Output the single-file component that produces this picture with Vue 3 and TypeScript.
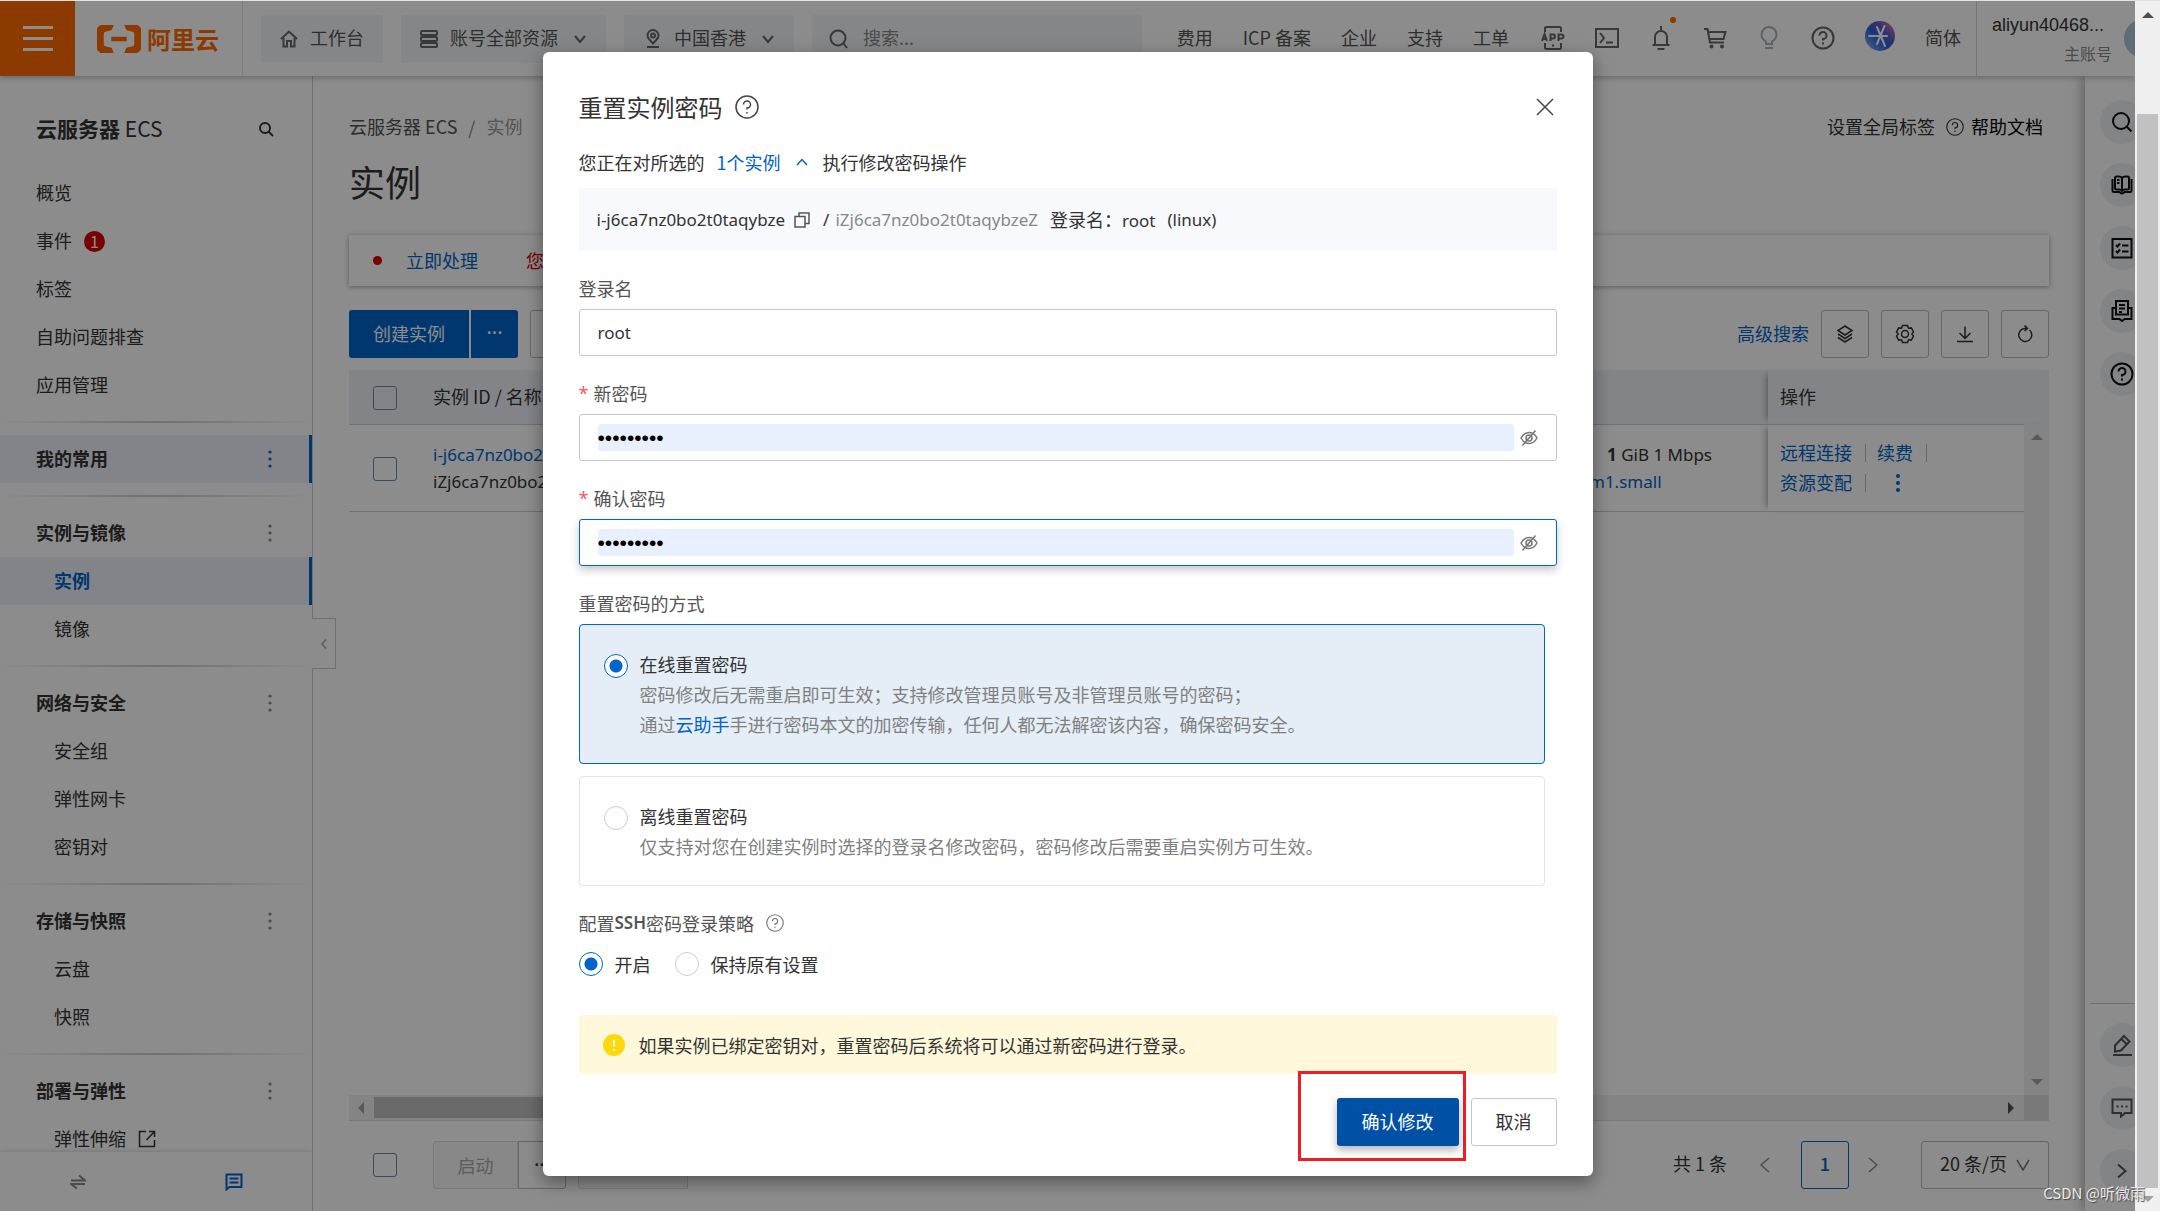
<script setup lang="ts">
import { ref } from 'vue'

interface NavItem { label: string; badge?: string; active?: boolean; external?: boolean }
interface NavGroup { title: string; highlight?: boolean; items: NavItem[] }

const topItems: NavItem[] = [
  { label: '概览' },
  { label: '事件', badge: '1' },
  { label: '标签' },
  { label: '自助问题排查' },
  { label: '应用管理' },
]

const groups: NavGroup[] = [
  { title: '我的常用', highlight: true, items: [] },
  { title: '实例与镜像', items: [{ label: '实例', active: true }, { label: '镜像' }] },
  { title: '网络与安全', items: [{ label: '安全组' }, { label: '弹性网卡' }, { label: '密钥对' }] },
  { title: '存储与快照', items: [{ label: '云盘' }, { label: '快照' }] },
  { title: '部署与弹性', items: [{ label: '弹性伸缩', external: true }] },
]

const loginName = ref('root')
const newPassword = ref('Abcd12345')
const confirmPassword = ref('Abcd12345')
const resetMode = ref('online')
const sshPolicy = ref('on')
const keyword = ref('')
const pageSize = ref('20')
</script>

<template>
  <div class="window">
    <div class="viewport">
      <header class="topbar">
        <button class="burger" aria-label="菜单"><i></i><i></i><i></i></button>
        <a class="logo" href="#" aria-label="阿里云">
          <svg width="44" height="28" viewBox="0 0 44 28" fill="none">
            <path d="M16 0H8Q0 0 0 8V20Q0 28 8 28H16L14 23.500 8 22Q6 21.500 6 19V9Q6 6.500 8 6L14 4.500Z" fill="#ff6a00" />
            <path d="M28 0H36Q44 0 44 8V20Q44 28 36 28H28L30 23.500 36 22Q38 21.500 38 19V9Q38 6.500 36 6L30 4.500Z" fill="#ff6a00" />
            <path d="M15 12.500H29V15.500H15Z" fill="#ff6a00" />
          </svg>
          <span>阿里云</span>
        </a>
        <div class="tools">
          <button class="chip">
            <svg width="18" height="18" viewBox="0 0 18 18"><path d="M1 9 9 1.500 17 9M3.500 8V16.500H7V11H11V16.500H14.500V8" /></svg>
            <span>工作台</span>
          </button>
          <button class="chip wide">
            <svg width="18" height="18" viewBox="0 0 18 18"><rect x="1" y="1" width="16" height="4" rx="1" /><rect x="1" y="7" width="16" height="4" rx="1" /><rect x="1" y="13" width="16" height="4" rx="1" /></svg>
            <span>账号全部资源</span>
            <svg width="14" height="10" viewBox="0 0 14 10"><path d="M2 2 7 8 12 2" /></svg>
          </button>
          <button class="chip wide">
            <svg width="19" height="19" viewBox="-2 0 19 19"><path d="M8 14.500C4 10.500 2.500 8.500 2.500 6.500A5.500 5.500 0 0 1 13.500 6.500C13.500 8.500 12 10.500 8 14.500ZM2 18H14" /><circle cx="8" cy="6.500" r="2" /></svg>
            <span>中国香港</span>
            <svg width="14" height="10" viewBox="0 0 14 10"><path d="M2 2 7 8 12 2" /></svg>
          </button>
          <label class="search">
            <svg width="20" height="20" viewBox="0 0 20 20"><circle cx="9" cy="9" r="7.500" /><path d="M14.500 14.500 18 19" /></svg>
            <input v-model="keyword" type="text" placeholder="搜索..." aria-label="搜索" />
          </label>
        </div>
        <nav class="links">
          <a href="#">费用</a><a href="#">ICP 备案</a><a href="#">企业</a><a href="#">支持</a><a href="#">工单</a>
        </nav>
        <div class="icons">
          <button aria-label="APP">
            <svg width="24" height="24" viewBox="0 0 24 24"><path d="M4 6V2.500Q4 1 5.500 1H18.500Q20 1 20 2.500V6M4 17V21.500Q4 23 5.500 23H18.500Q20 23 20 21.500V17M11 19.500H13" /><path d="M1 15 3.500 8 6 15M2 13H5M9.500 15V8.500H12Q14 8.500 14 10.500T12 12.500H9.500M17.500 15V8.500H20Q22.500 8.500 22.500 10.500T20 12.500H17.500" /></svg>
          </button>
          <button aria-label="终端">
            <svg width="24" height="24" viewBox="0 0 24 24"><rect x="1" y="3" width="22" height="18" /><path d="M5 7 9 12 5 17M11 16.500H18" /></svg>
          </button>
          <button class="bell" aria-label="消息">
            <svg width="24" height="24" viewBox="0 0 24 24"><path d="M12 0V4M3.500 19H20.500M6 19V11A6 6 0 0 1 18 11V19M8.500 23H15.500" /></svg>
            <i></i>
          </button>
          <button aria-label="购物车">
            <svg width="24" height="24" viewBox="0 0 24 24"><path d="M1 3H4.500L7 16.500H21M5.500 6H22.500L20.500 13H7" /><circle cx="8.500" cy="20.500" r="1" /><circle cx="19" cy="20.500" r="1" /></svg>
          </button>
          <button class="faint" aria-label="提示">
            <svg width="24" height="24" viewBox="0 0 24 24"><path d="M9 18V15.500Q4.500 13 4.500 8.500A7.500 7.500 0 0 1 19.500 8.500Q19.500 13 15 15.500V18ZM8 22H16" /></svg>
          </button>
          <button aria-label="帮助">
            <svg width="24" height="24" viewBox="0 0 24 24"><circle cx="12" cy="12" r="10.500" /><path d="M8.500 9.500A3.500 3.500 0 1 1 12 13V14.500M12 16.500V18.500" /></svg>
          </button>
          <button class="ai" aria-label="AI 助理">
            <svg width="30" height="30" viewBox="0 0 30 30">
              <defs><linearGradient id="ai" x1="0" y1="1" x2="1" y2="0"><stop offset="0" stop-color="#8ab8f5" /><stop offset=".45" stop-color="#2f5fe0" /><stop offset=".65" stop-color="#5a5cc8" /><stop offset="1" stop-color="#ff7a9a" /></linearGradient></defs>
              <circle cx="15" cy="15" r="15" fill="url(#ai)" stroke="none" />
              <path d="M4 15H22M12 6 20 25M19.500 5 12 23" stroke="#fff" stroke-linecap="round" />
            </svg>
          </button>
        </div>
        <a class="lang" href="#">简体</a>
        <div class="user">
          <div><b>aliyun40468...</b><small>主账号</small></div>
          <i></i>
        </div>
      </header>

      <div class="body">
        <aside class="side">
          <div class="side-title">
            <h2>云服务器 <span>ECS</span></h2>
            <svg width="16" height="16" viewBox="0 0 16 16"><circle cx="7" cy="7" r="5" /><path d="M10.500 10.500 15 15" /></svg>
          </div>
          <ul class="top-items">
            <li v-for="it in topItems" :key="it.label"><a href="#">{{ it.label }}</a><em v-if="it.badge">{{ it.badge }}</em></li>
          </ul>
          <section v-for="g in groups" :key="g.title" class="group">
            <h3 :class="{ on: g.highlight }">
              <span>{{ g.title }}</span>
              <svg width="4" height="18" viewBox="0 0 4 18"><circle cx="2" cy="2" r="1.600" /><circle cx="2" cy="9" r="1.600" /><circle cx="2" cy="16" r="1.600" /></svg>
            </h3>
            <ul>
              <li v-for="it in g.items" :key="it.label" :class="{ active: it.active }">
                <a href="#">{{ it.label }}</a>
                <svg v-if="it.external" width="18" height="18" viewBox="0 0 18 18"><path d="M8 1.500H1.500V16.500H16.500V10M11 1.500H16.500V7M16 2 8.500 10" /></svg>
              </li>
            </ul>
          </section>
          <div class="side-foot">
            <svg width="16" height="16" viewBox="0 0 16 16"><path d="M1 6.500H15L9 1.500M15 10H1L7 14.500" /></svg>
            <svg class="blue" width="18" height="18" viewBox="0 0 18 18"><path d="M1.500 1.500H16.500V14H4.500L1.500 16.500ZM4.500 5.500H13.500M4.500 9.500H13.500" /></svg>
          </div>
        </aside>

        <main class="main">
          <button class="collapse" aria-label="收起"><svg width="8" height="12" viewBox="0 0 8 12"><path d="M6 1.500 2 6 6 10.500" /></svg></button>
          <div class="crumbs">
            <a href="#">云服务器 ECS</a><i>/</i><span>实例</span>
            <div class="crumb-right">
              <a href="#">设置全局标签</a>
              <svg width="18" height="18" viewBox="0 0 24 24"><circle cx="12" cy="12" r="11" /><path d="M8.500 9.500A3.500 3.500 0 1 1 12 13V14.500M12 16.500V18.500" /></svg>
              <a class="strong" href="#">帮助文档</a>
            </div>
          </div>
          <h1>实例</h1>
          <div class="notice"><i></i><a href="#">立即处理</a><span>您</span></div>
          <div class="toolbar">
            <button class="primary">创建实例</button>
            <button class="primary more" aria-label="更多">···</button>
            <button class="plain ghost" aria-label="筛选"></button>
            <a href="#">高级搜索</a>
            <button class="plain" aria-label="分组"><svg width="18" height="18" viewBox="0 0 18 18"><path d="M9 1 16 5.500 9 10 2 5.500ZM2 9 9 13.500 16 9M2 12.500 9 17 16 12.500" /></svg></button>
            <button class="plain" aria-label="设置"><svg width="20" height="20" viewBox="0 0 20 20"><path d="M7.500 1.500H12.500L13.500 4.200 16.300 3.900 18.500 7.900 16.800 10 18.500 12.100 16.300 16.100 13.500 15.800 12.500 18.500H7.500L6.500 15.800 3.700 16.100 1.500 12.100 3.200 10 1.500 7.900 3.700 3.900 6.500 4.200Z" /><circle cx="10" cy="10" r="3.500" /></svg></button>
            <button class="plain" aria-label="下载"><svg width="18" height="18" viewBox="0 0 18 18"><path d="M9 1.500V13M3.500 8 9 13.500 14.500 8M1 16.500H17" /></svg></button>
            <button class="plain" aria-label="刷新"><svg width="18" height="18" viewBox="0 0 18 18"><path d="M13.500 5A6.500 6.500 0 1 1 8.500 3.500H11M8.500 .500 11.500 3.500 8.500 6" /></svg></button>
          </div>
          <div class="table-area">
            <table>
              <thead>
                <tr>
                  <th class="c-check"><input type="checkbox" aria-label="全选" /></th>
                  <th class="c-name">实例 ID / 名称</th>
                  <th></th>
                  <th class="c-spec"></th>
                  <th class="c-op">操作</th>
                </tr>
              </thead>
              <tbody>
                <tr>
                  <td class="c-check"><input type="checkbox" aria-label="选择实例" /></td>
                  <td class="c-name lat"><a href="#">i-j6ca7nz0bo2</a><br />iZj6ca7nz0bo2</td>
                  <td></td>
                  <td class="c-spec lat"><p><b>1</b> GiB 1 Mbps</p><a href="#">m1.small</a></td>
                  <td class="c-op">
                    <div><a href="#">远程连接</a><i></i><a href="#">续费</a><i></i></div>
                    <div><a href="#">资源变配</a><i></i><svg width="4" height="18" viewBox="0 0 4 18"><circle cx="2" cy="2" r="2" /><circle cx="2" cy="9" r="2" /><circle cx="2" cy="16" r="2" /></svg></div>
                  </td>
                </tr>
              </tbody>
            </table>
            <div class="vbar">
              <svg width="12" height="6" viewBox="0 0 12 6"><path d="M0 6 6 0 12 6Z" /></svg>
              <svg width="12" height="6" viewBox="0 0 12 6"><path d="M0 0 6 6 12 0Z" /></svg>
            </div>
          </div>
          <div class="hbar">
            <svg width="6" height="12" viewBox="0 0 6 12"><path d="M6 0 0 6 6 12Z" /></svg>
            <i></i>
            <svg class="dark" width="6" height="12" viewBox="0 0 6 12"><path d="M0 0 6 6 0 12Z" /></svg>
            <b></b>
          </div>
          <footer class="pager">
            <input type="checkbox" aria-label="全选本页" />
            <button class="off" disabled>启动</button><button class="plain dots" aria-label="更多操作">···</button>
            <button class="off blank" disabled aria-label="停止"></button>
            <span class="total">共 1 条</span>
            <svg width="10" height="16" viewBox="0 0 10 16"><path d="M9 1 1 8 9 15" /></svg>
            <button class="page">1</button>
            <svg width="10" height="16" viewBox="0 0 10 16"><path d="M1 1 9 8 1 15" /></svg>
            <div class="size">
              <select v-model="pageSize" aria-label="每页条数"><option value="20">20 条/页</option></select>
              <svg width="14" height="12" viewBox="0 0 14 12"><path d="M1 1 7 11 13 1" /></svg>
            </div>
          </footer>
        </main>

        <aside class="rail">
          <button aria-label="搜索"><svg width="22" height="22" viewBox="0 0 22 22"><circle cx="10" cy="10" r="8" /><path d="M16 16 20.500 20.500" /></svg></button>
          <button aria-label="文档"><svg width="22" height="20" viewBox="0 0 22 20"><path d="M11 3Q9.500 1.500 8 1.500H5.500Q4 1.500 4 3V13Q4 14.500 5.500 14.500H8Q10 14.500 11 16 12 14.500 14 14.500H16.500Q18 14.500 18 13V3Q18 1.500 16.500 1.500H14Q12.500 1.500 11 3ZM11 3V16M1.500 4V15.500Q1.500 17 3 17H8.500Q9.500 18.500 11 18.500T13.500 17H19Q20.500 17 20.500 15.500V4M6 5H8.500M6 8H8.500" /></svg></button>
          <button aria-label="任务"><svg width="22" height="22" viewBox="0 0 22 22"><path d="M1.500 2H20.500V20.500H1.500ZM5 8 6.500 9.500 9 6.500M5 14 6.500 15.500 9 12.500M11 8.500H17.500M11 14.500H17.500" /></svg></button>
          <button aria-label="资讯"><svg width="22" height="22" viewBox="0 0 22 22"><path d="M5 1H17V14.500H5ZM5 8H1.500V19H8.500L11 21 13.500 19H20.500V8H17M8 5H14M8 8.500H14M8 12H11" /></svg></button>
          <button aria-label="帮助"><svg width="24" height="24" viewBox="0 0 24 24"><circle cx="12" cy="12" r="10.500" /><path d="M8.500 9.500A3.500 3.500 0 1 1 12 13V14.500M12 16.500V18.500" /></svg></button>
          <hr />
          <button class="soft" aria-label="编辑"><svg width="22" height="22" viewBox="0 0 22 22"><path d="M2 21H21M4 17.500 4 11.500 13 2 18.500 7.500 10 16.500ZM10.500 5 15.500 10" /></svg></button>
          <button class="soft" aria-label="反馈"><svg width="22" height="20" viewBox="0 0 22 20"><path d="M1.500 1.500H20.500V15H14L10 18.500V15H1.500ZM5.500 8.500H7.500M10 8.500H12M14.500 8.500H16.500" /></svg></button>
          <button class="soft" aria-label="展开"><svg width="12" height="16" viewBox="0 0 12 16"><path d="M2 1.500 9.500 8 2 14.500" /></svg></button>
        </aside>
      </div>

      <div class="mask">
        <section class="modal" role="dialog" aria-labelledby="dlg-title">
          <header>
            <h2 id="dlg-title">重置实例密码</h2>
            <svg width="24" height="24" viewBox="0 0 24 24"><circle cx="12" cy="12" r="11" /><path d="M8.500 9.500A3.500 3.500 0 1 1 12 13V14.500M12 17V18.500" /></svg>
            <button class="close" aria-label="关闭"><svg width="18" height="18" viewBox="0 0 18 18"><path d="M1 1 17 17M17 1 1 17" /></svg></button>
          </header>
          <p class="intro">
            <span>您正在对所选的</span>
            <a href="#">1个实例<svg width="12" height="8" viewBox="0 0 12 8"><path d="M1 7 6 1.500 11 7" /></svg></a>
            <span>执行修改密码操作</span>
          </p>
          <div class="info">
            <span class="lat">i-j6ca7nz0bo2t0taqybze</span>
            <svg width="16" height="16" viewBox="0 0 16 16"><path d="M1 4.500H11V15H1ZM5 4V1H15V11.500H11.500" /></svg>
            <span class="lat slash">/</span>
            <span class="lat grey">iZj6ca7nz0bo2t0taqybzeZ</span>
            <span class="who">登录名：<span class="lat">root</span></span>
            <span class="lat os">(linux)</span>
          </div>

          <label class="lbl" for="login">登录名</label>
          <div class="field"><input id="login" v-model="loginName" class="lat" type="text" /></div>

          <label class="lbl" for="pwd"><em>*</em>新密码</label>
          <div class="field">
            <input id="pwd" v-model="newPassword" class="secret" type="password" />
            <svg width="18" height="18" viewBox="0 0 18 18"><path d="M1 9Q4 3.500 9 3.500T17 9Q14 14.500 9 14.500T1 9ZM2.500 16.500 15.500 1.500" /><circle cx="9" cy="9" r="3" /></svg>
          </div>

          <label class="lbl" for="pwd2"><em>*</em>确认密码</label>
          <div class="field focus">
            <input id="pwd2" v-model="confirmPassword" class="secret" type="password" />
            <svg width="18" height="18" viewBox="0 0 18 18"><path d="M1 9Q4 3.500 9 3.500T17 9Q14 14.500 9 14.500T1 9ZM2.500 16.500 15.500 1.500" /><circle cx="9" cy="9" r="3" /></svg>
          </div>

          <p class="lbl">重置密码的方式</p>
          <div class="card" :class="{ picked: resetMode === 'online' }">
            <input id="m1" v-model="resetMode" type="radio" value="online" />
            <div>
              <label for="m1">在线重置密码</label>
              <p>密码修改后无需重启即可生效；支持修改管理员账号及非管理员账号的密码；</p>
              <p>通过<a href="#">云助手</a>手进行密码本文的加密传输，任何人都无法解密该内容，确保密码安全。</p>
            </div>
          </div>
          <div class="card" :class="{ picked: resetMode === 'offline' }">
            <input id="m2" v-model="resetMode" type="radio" value="offline" />
            <div>
              <label for="m2">离线重置密码</label>
              <p>仅支持对您在创建实例时选择的登录名修改密码，密码修改后需要重启实例方可生效。</p>
            </div>
          </div>

          <p class="lbl ssh">配置<b>SSH</b>密码登录策略
            <svg width="18" height="18" viewBox="0 0 24 24"><circle cx="12" cy="12" r="11" /><path d="M8.500 9.500A3.500 3.500 0 1 1 12 13V14.500M12 17V18.500" /></svg>
          </p>
          <div class="radios">
            <label><input v-model="sshPolicy" type="radio" value="on" />开启</label>
            <label><input v-model="sshPolicy" type="radio" value="keep" />保持原有设置</label>
          </div>

          <div class="warn">
            <svg width="22" height="22" viewBox="0 0 22 22"><circle cx="11" cy="11" r="11" fill="#fdd80c" stroke="none" /><path d="M11 5.500V12.500M11 15V17" stroke="#fff8db" /></svg>
            <span>如果实例已绑定密钥对，重置密码后系统将可以通过新密码进行登录。</span>
          </div>
          <div class="actions">
            <button class="ok">确认修改</button>
            <button class="cancel">取消</button>
            <i class="marker"></i>
          </div>
        </section>
      </div>
    </div>

    <div class="scroll">
      <svg width="12" height="6" viewBox="0 0 12 6"><path d="M0 6 6 0 12 6Z" fill="#505050" /></svg>
      <i></i>
      <svg width="12" height="6" viewBox="0 0 12 6"><path d="M0 0 6 6 12 0Z" fill="#a0a0a0" /></svg>
    </div>
    <span class="credit">CSDN @听微雨</span>
  </div>
</template>

<style>
body { margin: 0; overflow: hidden; }
</style>

<style scoped>
.window { position: relative; display: flex; box-sizing: border-box; height: 100vh; border-top: 1px solid #dfe3e1; font: 18px/24px "Noto Sans CJK SC", sans-serif; color: #333; background: #fff; }
.window *, .window *::before { box-sizing: border-box; }
.viewport { position: relative; flex: 1; min-width: 0; display: flex; flex-direction: column; overflow: hidden; }
h1, h2, h3, p, ul { margin: 0; padding: 0; font-weight: 400; list-style: none; }
a { color: inherit; text-decoration: none; }
button, input, select { font: inherit; color: inherit; margin: 0; padding: 0; border: 0; background: none; outline: none; border-radius: 0; }
svg { flex: none; display: block; fill: none; stroke: currentColor; stroke-width: 1.500; }
i, em { font-style: normal; }
.lat { font-family: "Noto Sans", "Noto Sans CJK SC", sans-serif; font-size: 17px; }

.topbar { position: relative; z-index: 2; display: flex; align-items: center; height: 75px; background: #fff; box-shadow: 0 2px 6px rgba(0, 0, 0, .25); white-space: nowrap; color: #555; }
.burger { width: 75px; height: 75px; background: #ff6a00; display: flex; flex-direction: column; align-items: center; justify-content: center; gap: 8px; }
.burger i { width: 30px; height: 3px; background: #fff; }
.logo { display: flex; align-items: center; gap: 6px; width: 168px; height: 75px; padding-left: 22px; border-right: 1px solid #e3e4e6; color: #ff6a00; font-size: 24px; font-weight: 700; }
.tools { flex: 1; display: flex; gap: 18px; padding-left: 18px; }
.chip, .search { height: 48px; display: flex; align-items: center; gap: 12px; padding: 0 19px; background: #f3f5f8; border-radius: 3px; }
.chip svg, .search svg, .icons svg { stroke-width: 2; color: #666; }
.chip span, .search input, .links a, .lang { padding-bottom: 3px; }
.chip.wide span { margin-right: 3px; }
.search { width: 330px; gap: 14px; padding: 0 17px; }
.search input { width: 200px; color: #888; }
.search input::placeholder { color: #888; }
.links { display: flex; gap: 30px; }
.icons { display: flex; align-items: center; gap: 30px; padding: 0 0 2px 32px; }
.icons button { position: relative; }
.icons .ai { padding-bottom: 3px; }
.icons .faint svg { color: #aab2b8; }
.bell i { position: absolute; right: -3px; top: -9px; width: 6px; height: 6px; border-radius: 50%; background: #ff6a00; }
.lang { margin: 0 15px 0 30px; }
.user { display: flex; align-items: center; gap: 12px; height: 75px; width: 160px; margin-right: -1px; padding-left: 15px; border-left: 1px solid #d8d8d8; overflow: hidden; }
.user div { width: 120px; flex: none; text-align: right; }
.user b, .user small { display: block; font-weight: 400; line-height: 28px; }
.user b { font-family: "Liberation Sans", sans-serif; font-size: 18px; color: #333; text-align: left; }
.user small { font-size: 16px; color: #888; }
.user i { flex: none; width: 39px; height: 39px; border-radius: 50%; background: #a9c6d6; }

.body { flex: 1; min-height: 0; display: flex; }
.side { position: relative; flex: none; width: 313px; border-right: 1px solid #ccc; overflow: hidden; }
.side-title { display: flex; align-items: center; justify-content: space-between; height: 93px; padding: 12px 38px 0 36px; }
.side-title h2 { padding-bottom: 2px; font-size: 21px; font-weight: 700; line-height: 30px; }
.side-title h2 span { font-weight: 400; }
.side-title svg { stroke-width: 2; }
.side li, .side h3 { display: flex; align-items: center; height: 48px; padding-left: 36px; }
.side li a, .side h3 span { padding-bottom: 2px; }
.side em { width: 21px; height: 21px; margin-left: 12px; border-radius: 50%; background: #d90000; color: #fff; font-size: 16px; line-height: 21px; text-align: center; }
.group::before { content: ""; display: block; height: 2px; margin: 12px 0; background: linear-gradient(90deg, transparent, #ccc 50%, transparent); }
.side h3 { justify-content: space-between; padding-right: 40px; font-size: 18px; font-weight: 700; }
.side h3 svg, .c-op svg { fill: currentColor; stroke: none; }
.side h3 svg { color: #888; }
.side h3.on, .group li.active { background: #eef1f9; border-right: 3px solid #0064c8; }
.side h3.on { padding-right: 37px; }
.side h3.on svg { color: #0064c8; }
.group li { padding-left: 54px; gap: 12px; }
.group li.active { color: #0064c8; font-weight: 700; }
.side-foot { position: absolute; left: 0; right: 0; bottom: 0; height: 59px; display: flex; align-items: center; justify-content: space-around; background: #fff; box-shadow: 0 -1px 4px rgba(0, 0, 0, .15); color: #888; }
.side-foot svg { stroke-width: 2; }
.blue { color: #0064c8; }

.main { position: relative; flex: 1; min-width: 0; display: flex; flex-direction: column; padding: 36px 36px 22px; }
.collapse { position: absolute; left: -1px; top: 542px; width: 24px; height: 51px; display: flex; align-items: center; justify-content: center; border: 1px solid #ccc; border-left: 0; color: #aaa; background: #fff; }
.crumbs { display: flex; align-items: center; height: 30px; color: #555; white-space: nowrap; }
.crumbs a, .crumbs span, .notice a, .notice span, .toolbar a { padding-bottom: 2px; }
.crumbs i { padding: 0 11px; color: #888; }
.crumbs > span { color: #999; }
.crumb-right { display: flex; align-items: center; gap: 7px; margin-left: auto; padding-right: 6px; color: #333; }
.crumb-right > a:first-child { margin-right: 4px; }
.crumb-right .strong { color: #000; }
h1 { margin-top: 9px; font-size: 36px; line-height: 60px; }
.notice { display: flex; align-items: center; height: 51px; margin-top: 24px; padding-left: 24px; box-shadow: 0 1px 5px rgba(0, 0, 0, .35); color: #d90000; }
.notice i { width: 9px; height: 9px; margin-right: 24px; border-radius: 50%; background: #d90000; }
.notice a { margin-right: 48px; }
.main a { white-space: nowrap; }
.notice a, .toolbar a, tbody a { color: #0064c8; }
.toolbar { display: flex; align-items: center; gap: 12px; margin-top: 24px; }
.primary { height: 48px; width: 120px; padding-bottom: 2px; background: #0064c8; color: #fff; border-radius: 3px 0 0 3px; }
.primary.more { width: 47px; margin-left: -10px; border-radius: 0 3px 3px 0; }
.primary.more, .pager .dots { font-family: "Noto Sans", sans-serif; font-size: 20px; }
.plain { width: 48px; height: 48px; display: flex; align-items: center; justify-content: center; border: 1px solid #bbb; border-radius: 3px; }
.toolbar .ghost { width: 120px; margin-right: auto; }
.table-area { position: relative; flex: 1; min-height: 0; margin-top: 12px; }
table { width: 100%; border-collapse: collapse; table-layout: fixed; }
th { height: 54px; padding: 0 0 2px; background: #eef1f8; text-align: left; font-weight: 400; border-bottom: 1px solid #ccc; }
td { height: 87px; padding: 0; border-bottom: 1px solid #ccc; line-height: 27px; }
.c-check { width: 84px; padding: 2px 0 0 24px; }
.c-name { width: 116px; white-space: nowrap; }
.c-spec { width: 185px; padding-left: 6px; white-space: nowrap; }
.c-spec p { padding-left: 18px; }
.c-op { width: 281px; padding-left: 12px; box-shadow: -6px 0 6px -4px rgba(0, 0, 0, .3); }
.c-op div { display: flex; align-items: center; height: 30px; }
.c-op i { width: 1px; height: 18px; margin: 0 11px 0 13px; background: #bbb; }
.c-op svg { margin-left: 19px; color: #0064c8; }
input[type="checkbox"] { appearance: none; display: block; width: 24px; height: 24px; border: 1px solid #6b89a8; border-radius: 3px; }
.vbar { position: absolute; top: 54px; right: 0; bottom: 0; width: 25px; display: flex; flex-direction: column; align-items: center; justify-content: space-between; padding: 10px 0; background: #f1f1f1; }
.vbar svg, .hbar svg { fill: #a3a3a3; stroke: none; }
.hbar { display: flex; align-items: center; height: 26px; padding-left: 9px; background: #f1f1f1; border-bottom: 1px solid #ddd; }
.hbar i { width: 62%; height: 21px; margin: 0 auto 0 10px; background: #c1c1c1; }
.hbar .dark { fill: #505050; margin-right: 10px; }
.hbar b { width: 25px; height: 25px; background: #dcdcdc; }
.pager { display: flex; align-items: center; margin-top: 20px; padding-left: 24px; white-space: nowrap; }
.off { width: 85px; height: 48px; margin-left: 36px; background: #f7f7f7; border: 1px solid #ddd; border-radius: 3px 0 0 3px; color: #aaa; }
.pager .dots { border-radius: 0 3px 3px 0; }
.off.blank { width: 110px; margin-left: 12px; }
.total { margin-left: auto; margin-right: 33px; padding-bottom: 5px; }
.pager > svg { color: #888; }
.page { width: 48px; height: 48px; margin: 0 19px 0 31px; padding-bottom: 4px; border: 1px solid #0064c8; border-radius: 3px; color: #0064c8; font-weight: 500; }
.size { position: relative; width: 128px; height: 48px; margin-left: 43px; border: 1px solid #bbb; border-radius: 3px; }
.size select { appearance: none; width: 100%; height: 100%; padding: 0 0 5px 18px; }
.size svg { position: absolute; right: 18px; top: 17px; pointer-events: none; color: #777; }

.rail { position: relative; flex: none; width: 50px; display: flex; flex-direction: column; gap: 19px; padding: 24px 0 18px 15px; overflow: visible; box-shadow: -3px 0 12px rgba(0, 0, 0, .3); color: #111; background: #fff; }
.rail button { flex: none; width: 44px; height: 44px; display: flex; align-items: center; justify-content: center; border-radius: 50%; background: #eef1f4; }
.rail svg { stroke-width: 2; }
.rail .soft { color: #555; }
.rail hr { width: 45px; margin: auto -10px 0; border: 0; border-top: 1px solid #ccc; }

.mask { position: absolute; inset: 0; z-index: 3; display: flex; justify-content: center; align-items: flex-start; padding-top: 51px; background: rgba(0, 0, 0, .45); }
.modal { width: 1050px; padding: 36px 36px 30px; border-radius: 6px; background: #fff; box-shadow: 0 6px 18px rgba(0, 0, 0, .4); }
.modal header { display: flex; align-items: center; gap: 12px; height: 38px; }
.modal h2 { font-size: 24px; line-height: 36px; }
.modal header svg { color: #444; }
.close { margin-left: auto; padding: 3px; }
.intro { display: flex; height: 30px; margin-top: 21px; line-height: 30px; }
.intro a { display: flex; align-items: center; gap: 15px; margin: 0 15px 0 12px; color: #0064c8; }
.info { display: flex; align-items: center; height: 63px; margin-top: 11px; padding-left: 18px; background: #f7f9fc; white-space: nowrap; }
.info > svg { margin: 0 13px 0 9px; color: #555; }
.slash { margin-right: 6px; }
.grey { color: #888; }
.who { margin-left: 12px; }
.os { margin-left: 12px; }
.lbl { display: flex; align-items: center; height: 30px; margin: 22px 0 6px; color: #555; }
.lbl em { width: 15px; color: #f15b5b; font: 18px/24px "Noto Sans", sans-serif; }
.field { display: flex; align-items: center; justify-content: space-between; height: 47px; padding: 0 18px; border: 1px solid #c4c6c9; border-radius: 3px; }
.field.focus { border-color: #0064c8; box-shadow: 0 4px 8px rgba(0, 0, 0, .22); }
.field input { width: 916px; height: 27px; }
.field .secret { background: #e8effd; color: #000; border-radius: 3px; font-family: "Liberation Sans", sans-serif; font-size: 21px; }
.field svg { color: #777; }
.card { display: flex; width: 966px; padding: 24px; margin-bottom: 12px; border: 1px solid #e3e4e6; border-radius: 4px; line-height: 30px; }
.card.picked { border-color: #0064c8; background: #e5edf6; }
.card p { color: #808080; white-space: nowrap; }
.card a { color: #0064c8; }
input[type="radio"] { appearance: none; flex: none; width: 24px; height: 24px; margin: 5px 12px 0 0; border: 1px solid #ccc; border-radius: 50%; background: #fff; }
input[type="radio"]:checked { border-color: #0064c8; background: radial-gradient(circle, #0064c8 6px, #fff 7px); }
.ssh { margin-bottom: 11px; }
.ssh b { font: 600 17px/24px "Noto Sans", sans-serif; }
.ssh svg { margin-left: 12px; color: #777; }
.radios { display: flex; gap: 24px; height: 30px; }
.radios label { display: flex; align-items: center; }
.radios input[type="radio"] { margin-top: 0; }
.warn { display: flex; align-items: center; gap: 14px; height: 59px; margin-top: 36px; padding-left: 24px; border-radius: 3px; background: #fff8db; }
.warn svg { stroke-width: 2; }
.actions { position: relative; display: flex; justify-content: flex-end; gap: 12px; margin-top: 24px; }
.actions button { height: 48px; padding-bottom: 2px; border-radius: 3px; }
.ok { width: 122px; background: #0051a5; color: #fff; box-shadow: 0 4px 8px rgba(0, 0, 0, .3); }
.cancel { width: 86px; border: 1px solid #c4c6c9; }
.marker { position: absolute; right: 91px; top: -27px; width: 168px; height: 90px; border: 3px solid #ee1c25; }

.scroll { position: relative; z-index: 4; flex: none; width: 25px; display: flex; flex-direction: column; align-items: center; padding: 11px 0 9px; background: #f0f0f0; }
.scroll svg { stroke: none; }
.scroll i { flex: 1; width: 21px; margin: 96px 0 8px; background: #c1c1c1; }
.credit { position: absolute; z-index: 5; right: 15px; bottom: 6px; font-size: 15px; color: #e8e8e8; text-shadow: 1px 1px 1px #444; white-space: nowrap; }
</style>
